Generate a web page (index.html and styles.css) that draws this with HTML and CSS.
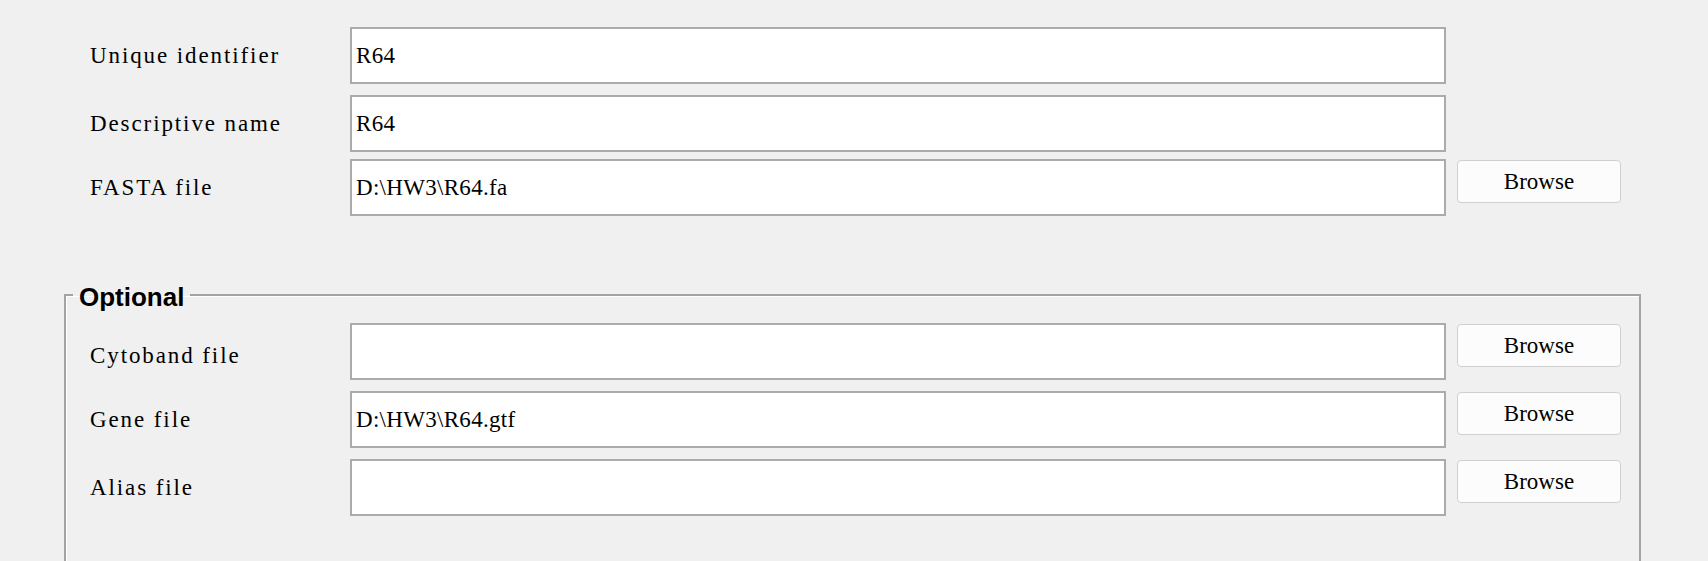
FILE: index.html
```html
<!DOCTYPE html>
<html>
<head>
<meta charset="utf-8">
<link rel="stylesheet" href="styles.css">
</head>
<body>
<div class="form">
  <div class="row">
    <label class="label">Unique identifier</label>
    <input class="field" type="text" value="R64">
  </div>
  <div class="row row-b">
    <label class="label">Descriptive name</label>
    <input class="field" type="text" value="R64">
  </div>
  <div class="row row-c">
    <label class="label">FASTA file</label>
    <input class="field" type="text" value="D:\HW3\R64.fa">
    <button class="btn">Browse</button>
  </div>
</div>
<fieldset class="group">
  <legend class="legend">Optional</legend>
  <div class="group-body">
    <div class="row">
      <label class="label label-low">Cytoband file</label>
      <input class="field" type="text" value="">
      <button class="btn">Browse</button>
    </div>
    <div class="row row-b">
      <label class="label">Gene file</label>
      <input class="field" type="text" value="D:\HW3\R64.gtf">
      <button class="btn">Browse</button>
    </div>
    <div class="row row-b">
      <label class="label">Alias file</label>
      <input class="field" type="text" value="">
      <button class="btn">Browse</button>
    </div>
  </div>
</fieldset>
</body>
</html>
```
FILE: styles.css
```css
html, body {
  margin: 0;
  padding: 0;
  background: #f0f0f0;
  overflow: hidden;
}
body {
  font-family: "Liberation Serif", "Times New Roman", serif;
  font-size: 23px;
  color: #000;
}
.form {
  padding: 27px 0 0 90px;
}
.row {
  display: flex;
  align-items: flex-start;
  height: 57px;
}
.row-b { margin-top: 11px; }
.row-c { margin-top: 7px; }
.label {
  width: 260px;
  flex: none;
  align-self: center;
  letter-spacing: 1.9px;
}
.label-low {
  margin-top: 9px;
}
.field {
  flex: none;
  box-sizing: border-box;
  width: 1096px;
  height: 57px;
  margin: 0;
  padding: 0 0 0 4px;
  border: 2px solid #ababaf;
  background: #fff;
  font: inherit;
  letter-spacing: 0.3px;
  color: #000;
  outline: none;
}
.btn {
  flex: none;
  box-sizing: border-box;
  width: 164px;
  height: 43px;
  margin: 1px 0 0 11px;
  padding: 0;
  border: 1px solid #d0d0d0;
  border-radius: 4px;
  background: #fcfcfc;
  font: inherit;
  letter-spacing: 0;
  color: #000;
}
.group {
  margin: 62px 67px 0 64px;
  padding: 12px 0 200px 0;
  border: 2px solid #a3a3a3;
  box-shadow: inset 1px 1px 0 #fff;
  min-width: 0;
}
.group-body {
  padding-left: 24px;
}
.legend {
  margin-left: 7px;
  padding: 5px 6px 0 6px;
  font-family: "Liberation Sans", Arial, sans-serif;
  font-weight: bold;
  font-size: 26px;
  line-height: 28px;
  letter-spacing: 0;
}
```
